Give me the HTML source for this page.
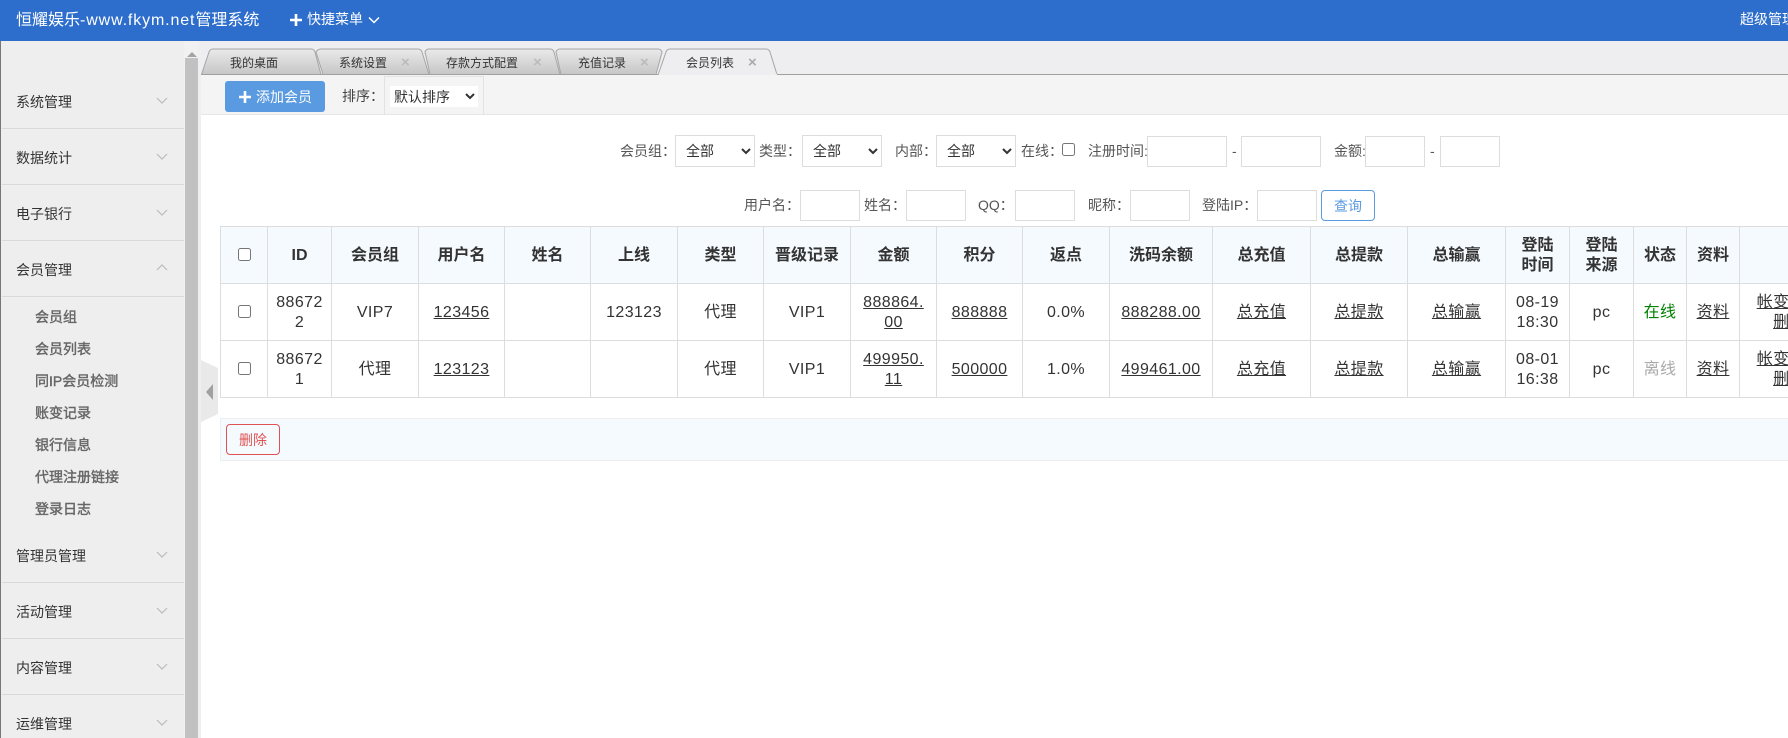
<!DOCTYPE html>
<html lang="zh"><head><meta charset="utf-8"><title>管理系统</title>
<style>
*{box-sizing:border-box}
html,body{margin:0;padding:0;width:1788px;height:738px;overflow:hidden;background:#fff}
body{position:relative;font-family:"Liberation Sans","Noto Sans CJK SC",sans-serif;color:#333;font-size:14px}
.a{position:absolute;white-space:nowrap}
#hd{left:0;top:0;width:1788px;height:41px;background:#2d6dcc}
#side{left:0;top:41px;width:184px;height:697px;background:#eee;border-left:1px solid #777}
.sep{position:absolute;left:1px;width:183px;height:1px;background:#d9d9d9}
.mi{position:absolute;left:15px;font-size:14px;line-height:24px;color:#333;white-space:nowrap}
.si{position:absolute;left:34px;font-size:14px;line-height:20px;color:#666;white-space:nowrap;-webkit-text-stroke:.4px #666}
.chev{position:absolute;left:156px}
.lb{position:absolute;white-space:nowrap;font-size:14px;line-height:20px;color:#555}
.ip{position:absolute;border:1px solid #ddd;background:#fff;padding:0;margin:0;outline:0}
select.ip{font:14px "Liberation Sans","Noto Sans CJK SC",sans-serif;color:#333;padding-left:6px}
.tt{position:absolute;font-size:12px;line-height:16px;color:#333;white-space:nowrap;top:55px}
.tx{position:absolute;font-size:15px;line-height:16px;color:#bbb;top:55px;font-weight:700}
table{position:absolute;left:220px;top:226px;width:1619px;border-collapse:collapse;table-layout:fixed;font-size:16px;line-height:20px;color:#333}
th,td{border:1px solid #ddd;padding:2px 0 0;text-align:center;vertical-align:middle;height:57px}
th{background:#f5fafe;font-weight:700}
td{font-weight:400;letter-spacing:.4px}
td a,td u{color:#333;text-decoration:underline}
input[type=checkbox]{margin:0;width:13px;height:13px;vertical-align:middle;position:relative;top:-1px}
</style></head><body>
<div id="hd" class="a"></div>
<div class="a" style="left:16px;top:9px;font-size:16px;line-height:24px;color:#fff">恒耀娱乐<span style="letter-spacing:.87px">-www.fkym.net</span>管理系统</div>
<svg class="a" style="left:290px;top:14px" width="12" height="12"><path d="M6 0V12M0 6H12" stroke="#fff" stroke-width="2.6"/></svg>
<div class="a" style="left:307px;top:9px;font-size:14px;line-height:20px;color:#fff">快捷菜单</div>
<svg class="a" style="left:368px;top:16px" width="12" height="9"><path d="M1 1.5L6 6.5L11 1.5" stroke="#fff" stroke-width="1.5" fill="none"/></svg>
<div class="a" style="left:1740px;top:9px;width:48px;overflow:hidden;font-size:14px;line-height:20px;color:#fff">超级管理员</div>

<div id="side" class="a">
<div class="mi" style="top:49px">系统管理</div><div class="sep" style="top:87px"></div>
<div class="mi" style="top:105px">数据统计</div><div class="sep" style="top:143px"></div>
<div class="mi" style="top:161px">电子银行</div><div class="sep" style="top:199px"></div>
<div class="mi" style="top:217px">会员管理</div><div class="sep" style="top:255px"></div>
<div class="si" style="top:266px">会员组</div>
<div class="si" style="top:298px">会员列表</div>
<div class="si" style="top:330px">同IP会员检测</div>
<div class="si" style="top:362px">账变记录</div>
<div class="si" style="top:394px">银行信息</div>
<div class="si" style="top:426px">代理注册链接</div>
<div class="si" style="top:458px">登录日志</div>
<div class="mi" style="top:503px">管理员管理</div><div class="sep" style="top:541px"></div>
<div class="mi" style="top:559px">活动管理</div><div class="sep" style="top:597px"></div>
<div class="mi" style="top:615px">内容管理</div><div class="sep" style="top:653px"></div>
<div class="mi" style="top:671px">运维管理</div>
<svg class="chev" style="left:155px;top:0" width="12" height="697" fill="none" stroke="#bbb" stroke-width="1.2"><path d="M1 57L6 62L11 57M1 113L6 118L11 113M1 169L6 174L11 169M1 229L6 224L11 229M1 511L6 516L11 511M1 567L6 572L11 567M1 623L6 628L11 623M1 679L6 684L11 679"/></svg>
</div>
<div class="a" style="left:184px;top:41px;width:17px;height:697px;background:#f1f1f1"></div>
<svg class="a" style="left:187px;top:52px" width="10" height="6"><path d="M5 0L10 5H0Z" fill="#a3a3a3"/></svg>
<div class="a" style="left:185px;top:58px;width:13px;height:680px;background:#c1c1c1"></div>
<div class="a" style="left:198px;top:41px;width:3px;height:697px;background:#efeff1"></div>

<!-- tabs -->
<div class="a" style="left:201px;top:41px;width:1587px;height:34px;background:#eeeef0"></div>
<svg class="a" style="left:201px;top:41px" width="1587" height="35">
<defs><linearGradient id="g" x1="0" y1="0" x2="0" y2="1"><stop offset="0" stop-color="#eaeaea"/><stop offset="1" stop-color="#c6c6c6"/></linearGradient></defs>
<path d="M0.5 33.5L8 11Q9 8 12 8H110Q113 8 114 11L120 33.5Z" fill="url(#g)" stroke="#a5a5a5"/>
<path d="M122 33.5L115 11Q117 8 120 8H217Q220 8 221 11L228 33.5Z" fill="url(#g)" stroke="#a5a5a5"/>
<path d="M229 33.5L224 11Q225 8 228 8H349Q352 8 353 11L359 33.5Z" fill="url(#g)" stroke="#a5a5a5"/>
<path d="M360 33.5L355 11Q356 8 359 8H457Q460 8 461 11L455 33.5Z" fill="url(#g)" stroke="#a5a5a5"/>
<path d="M0 33.5H1587" stroke="#a0a0a0"/>
<path d="M457 34L465 11Q466 8 469 8H565Q568 8 569 11L576 33.5" fill="#eeeef0" stroke="#a5a5a5"/>
<path d="M458 33.5H576" stroke="#eeeef0" stroke-width="1.5"/>
</svg>
<div class="tt" style="left:230px">我的桌面</div>
<div class="tt" style="left:339px">系统设置</div><div class="tx" style="left:401px">×</div>
<div class="tt" style="left:446px">存款方式配置</div><div class="tx" style="left:533px">×</div>
<div class="tt" style="left:578px">充值记录</div><div class="tx" style="left:640px">×</div>
<div class="tt" style="left:686px">会员列表</div><div class="tx" style="left:748px;color:#aaa">×</div>

<!-- toolbar -->
<div class="a" style="left:201px;top:75px;width:1587px;height:40px;background:#f4f4f4;border-bottom:1px solid #e6e6e6"></div>
<div class="a" style="left:225px;top:81px;width:100px;height:31px;background:#5a9ae0;border-radius:3px"></div>
<svg class="a" style="left:239px;top:91px" width="12" height="12"><path d="M6 0V12M0 6H12" stroke="#fff" stroke-width="2.6"/></svg>
<div class="a" style="left:256px;top:87px;font-size:14px;line-height:20px;color:#fff">添加会员</div>
<div class="lb" style="left:342px;top:86px;color:#444">排序：</div>
<div class="a" style="left:384px;top:76px;width:100px;height:39px;border:1px solid #e2e2e2;border-bottom:0"></div>
<select class="ip" style="left:390px;top:86px;width:88px;height:21px;border:0;padding-left:0"><option>默认排序</option></select>

<!-- filters -->
<div class="lb" style="left:620px;top:141px">会员组：</div>
<select class="ip" style="left:675px;top:135px;width:80px;height:32px"><option>全部</option></select>
<div class="lb" style="left:759px;top:141px">类型：</div>
<select class="ip" style="left:802px;top:135px;width:80px;height:32px"><option>全部</option></select>
<div class="lb" style="left:895px;top:141px">内部：</div>
<select class="ip" style="left:936px;top:135px;width:80px;height:32px"><option>全部</option></select>
<div class="lb" style="left:1021px;top:141px">在线：</div>
<input type="checkbox" class="a" style="left:1062px;top:143px;position:absolute">
<div class="lb" style="left:1088px;top:141px">注册时间:</div>
<div class="ip" style="left:1147px;top:136px;width:80px;height:31px"></div>
<div class="lb" style="left:1232px;top:141px">-</div>
<div class="ip" style="left:1241px;top:136px;width:80px;height:31px"></div>
<div class="lb" style="left:1334px;top:141px">金额:</div>
<div class="ip" style="left:1365px;top:136px;width:60px;height:31px"></div>
<div class="lb" style="left:1430px;top:141px">-</div>
<div class="ip" style="left:1440px;top:136px;width:60px;height:31px"></div>

<div class="lb" style="left:744px;top:195px">用户名：</div>
<div class="ip" style="left:800px;top:190px;width:60px;height:31px"></div>
<div class="lb" style="left:864px;top:195px">姓名：</div>
<div class="ip" style="left:906px;top:190px;width:60px;height:31px"></div>
<div class="lb" style="left:978px;top:195px">QQ：</div>
<div class="ip" style="left:1015px;top:190px;width:60px;height:31px"></div>
<div class="lb" style="left:1088px;top:195px">昵称：</div>
<div class="ip" style="left:1130px;top:190px;width:60px;height:31px"></div>
<div class="lb" style="left:1202px;top:195px">登陆IP：</div>
<div class="ip" style="left:1257px;top:190px;width:60px;height:31px"></div>
<div class="a" style="left:1321px;top:190px;width:54px;height:31px;border:1px solid #5a9ae0;border-radius:4px;color:#5a9ae0;font-size:14px;line-height:30px;text-align:center">查询</div>

<!-- handle -->
<svg class="a" style="left:201px;top:360px" width="17" height="62"><path d="M0 0L17 8V54L0 62Z" fill="#e9e9e9"/><path d="M12 24V40L5 32Z" fill="#a0a0a0"/></svg>

<!-- table -->
<table>
<colgroup><col style="width:47px"><col style="width:64px"><col style="width:87px"><col style="width:86px"><col style="width:86px"><col style="width:87px"><col style="width:86px"><col style="width:87px"><col style="width:86px"><col style="width:86px"><col style="width:87px"><col style="width:103px"><col style="width:98px"><col style="width:97px"><col style="width:98px"><col style="width:64px"><col style="width:64px"><col style="width:53px"><col style="width:53px"><col style="width:100px"></colgroup>
<tr><th><input type="checkbox"></th><th>ID</th><th>会员组</th><th>用户名</th><th>姓名</th><th>上线</th><th>类型</th><th>晋级记录</th><th>金额</th><th>积分</th><th>返点</th><th>洗码余额</th><th>总充值</th><th>总提款</th><th>总输赢</th><th>登陆<br>时间</th><th>登陆<br>来源</th><th>状态</th><th>资料</th><th></th></tr>
<tr><td><input type="checkbox"></td><td>88672<br>2</td><td>VIP7</td><td><u>123456</u></td><td></td><td>123123</td><td>代理</td><td>VIP1</td><td><u>888864.<br>00</u></td><td><u>888888</u></td><td>0.0%</td><td><u>888288.00</u></td><td><u>总充值</u></td><td><u>总提款</u></td><td><u>总输赢</u></td><td>08-19<br>18:30</td><td>pc</td><td style="color:#008000">在线</td><td><u>资料</u></td><td><u>帐变记录</u><br><u>删除</u></td></tr>
<tr><td><input type="checkbox"></td><td>88672<br>1</td><td>代理</td><td><u>123123</u></td><td></td><td></td><td>代理</td><td>VIP1</td><td><u>499950.<br>11</u></td><td><u>500000</u></td><td>1.0%</td><td><u>499461.00</u></td><td><u>总充值</u></td><td><u>总提款</u></td><td><u>总输赢</u></td><td>08-01<br>16:38</td><td>pc</td><td style="color:#aaa">离线</td><td><u>资料</u></td><td><u>帐变记录</u><br><u>删除</u></td></tr>
</table>

<!-- bar -->
<div class="a" style="left:220px;top:418px;width:1568px;height:43px;background:#f5fafe;border:1px solid #eee;border-right:0"></div>
<div class="a" style="left:226px;top:424px;width:54px;height:31px;border:1px solid #e05252;border-radius:4px;color:#e05252;font-size:14px;line-height:30px;text-align:center">删除</div>
</body></html>
